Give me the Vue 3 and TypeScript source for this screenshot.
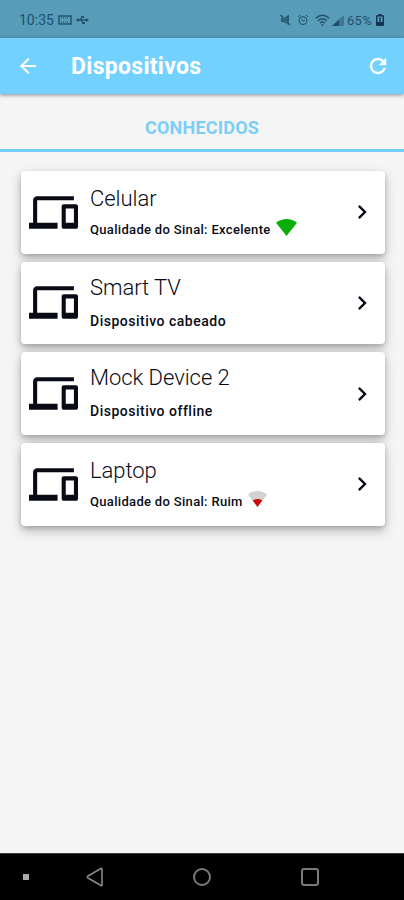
<script setup lang="ts">
interface Device {
  name: string
  status: string
  signal?: 'strong' | 'weak'
}

const devices: Device[] = [
  { name: 'Celular', status: 'Qualidade do Sinal: Excelente', signal: 'strong' },
  { name: 'Smart TV', status: 'Dispositivo cabeado' },
  { name: 'Mock Device 2', status: 'Dispositivo offline' },
  { name: 'Laptop', status: 'Qualidade do Sinal: Ruim', signal: 'weak' },
]
</script>

<template>
  <div class="screen">
    <div class="status-bar">
      <div class="status-left">
        <span class="clock">10:35</span>
        <svg class="cast" width="14" height="10" viewBox="0 0 14 10">
          <rect x="1" y="1" width="12" height="8" fill="none" stroke="currentColor" stroke-width="1.4" />
          <path d="M3 3h8M3 7h8" stroke="currentColor" stroke-width="1" stroke-dasharray="1 1" />
        </svg>
        <svg class="usb" width="13" height="10" viewBox="0 0 13 10">
          <path d="M1 5h10M4 5l2-3h1M5 5l2 3h1" fill="none" stroke="currentColor" stroke-width="1.3" />
          <circle cx="2" cy="5" r="1.5" fill="currentColor" />
          <path d="M10 3l3 2-3 2zM5.500 1h2.400v2H5.500zM6.500 7h2.400v2H6.500z" fill="currentColor" />
        </svg>
      </div>
      <div class="status-right">
        <svg class="mute" width="11" height="12" viewBox="0 0 11 12">
          <path d="M1 4h3l5-3.500v11L4 8H1z" fill="currentColor" opacity=".85" />
          <path d="M.5 1l9.500 10" stroke="#579db9" stroke-width="2" />
          <path d="M.5 1l9.500 10" stroke="currentColor" stroke-width="1.300" />
        </svg>
        <svg class="alarm" width="12" height="12" viewBox="0 0 12 12" fill="none" stroke="currentColor" stroke-width="1">
          <circle cx="6" cy="6.600" r="4" />
          <path d="M1 2.800L3.200 1M11 2.800L8.800 1M4 5.200l2 2 2-1.400" />
        </svg>
        <svg class="wifi" width="15" height="13" viewBox="0 0 15 13" fill="none" stroke="currentColor" stroke-width="1.400">
          <path d="M.8 4.200Q7.500-1.800 14.200 4.200M3 6.700Q7.500 2.700 12 6.700M5.100 9Q7.500 7 9.900 9" />
          <circle cx="7.500" cy="11" r="1" fill="currentColor" stroke="none" />
        </svg>
        <svg class="cell" width="12" height="11" viewBox="0 0 12 11">
          <path d="M0 11L12 0v11z" fill="currentColor" opacity=".5" />
          <path d="M0 11l7-6.400V11z" fill="currentColor" />
        </svg>
        <span class="percent">65%</span>
        <svg class="battery" width="8" height="12" viewBox="0 0 8 12">
          <path d="M2.500 0h3v1.500h-3z" fill="currentColor" />
          <rect x=".7" y="1.700" width="6.600" height="9.600" rx=".6" fill="none" stroke="currentColor" stroke-width="1.400" />
          <path d="M1 8h6v3H1zM3.300 3.500h1.400v5H3.300z" fill="currentColor" />
        </svg>
      </div>
    </div>

    <header class="app-bar">
      <svg class="back" width="24" height="24" viewBox="0 0 24 24">
        <path d="M20 11H7.830l5.590-5.590L12 4l-8 8 8 8 1.410-1.410L7.830 13H20v-2z" fill="currentColor" />
      </svg>
      <h1>Dispositivos</h1>
      <svg class="refresh" width="24" height="24" viewBox="0 0 24 24">
        <path d="M17.650 6.350A7.960 7.960 0 0 0 12 4a8 8 0 1 0 7.730 10h-2.080A6 6 0 1 1 12 6c1.660 0 3.140.69 4.220 1.780L13 11h7V4l-2.350 2.350z" fill="currentColor" stroke="currentColor" stroke-width=".4" />
      </svg>
    </header>

    <div class="tab">CONHECIDOS</div>

    <main class="list">
      <article v-for="device in devices" :key="device.name" class="card" :class="{ wireless: device.signal }">
        <svg class="device-icon" viewBox="0 0 24 24">
          <path d="M4 6h18V4H4c-1.100 0-2 .9-2 2v11H0v3h14v-3H4V6zm19 2h-6c-.55 0-1 .45-1 1v10c0 .55.45 1 1 1h6c.55 0 1-.45 1-1V9c0-.55-.45-1-1-1zm-1 9h-4v-7h4v7z" fill="currentColor" />
        </svg>
        <div class="info">
          <h2>{{ device.name }}</h2>
          <div class="status">
            <span>{{ device.status }}</span>
            <svg v-if="device.signal === 'strong'" class="signal strong" viewBox="0 0 24 19" preserveAspectRatio="none">
              <path d="M0 4.200C7-1.400 17-1.400 24 4.200L12 19z" fill="#0aad0a" />
            </svg>
            <svg v-else-if="device.signal === 'weak'" class="signal weak" viewBox="0 0 24 19" preserveAspectRatio="none">
              <path d="M0 4.200C7-1.400 17-1.400 24 4.200L12 19z" fill="#d2d2d2" />
              <path d="M6 11.400C9 9 15 9 18 11.400L12 19z" fill="#c80a0a" />
            </svg>
          </div>
        </div>
        <svg class="chevron" width="28" height="28" viewBox="0 0 24 24">
          <path d="M8.590 16.590L13.170 12 8.590 7.410 10 6l6 6-6 6z" fill="currentColor" />
        </svg>
      </article>
    </main>

    <nav class="nav-bar">
      <span class="dot"></span>
      <svg class="nav-back" width="18" height="20" viewBox="0 0 18 20">
        <path d="M16 2v16q0 1-1 .5L2 11q-1.400-1 0-2L15 1.500q1-.5 1 .5z" fill="none" stroke="currentColor" stroke-width="1.600" />
      </svg>
      <span class="home"></span>
      <span class="recents"></span>
    </nav>
  </div>
</template>

<style>
body {
  margin: 0;
}
</style>

<style scoped>
.screen {
  display: flex;
  flex-direction: column;
  width: 404px;
  height: 900px;
  overflow: hidden;
  background: #f5f5f5;
  font-family: Roboto, sans-serif;
  color: #080b16;
}

.status-bar {
  flex: none;
  display: flex;
  justify-content: space-between;
  align-items: center;
  box-sizing: border-box;
  height: 38px;
  padding: 2px 20px 0 19px;
  background: #579db9;
  color: #214f6b;
  font-size: 14px;
}

.status-left,
.status-right {
  display: flex;
  align-items: center;
}

.cast {
  margin-left: 4px;
}

.usb {
  margin-left: 4px;
}

.alarm {
  margin-left: 6px;
}

.wifi {
  margin-left: 6px;
}

.cell {
  margin-left: 2px;
}

.percent {
  margin-left: 3px;
  font-size: 13px;
  letter-spacing: 0.3px;
}

.battery {
  margin-left: 4px;
  color: #12364f;
}

.app-bar {
  flex: none;
  position: relative;
  display: flex;
  align-items: center;
  height: 56px;
  padding: 0 14px 0 16px;
  box-sizing: border-box;
  background: #73d1ff;
  color: #fff;
  box-shadow: 0 1px 4px rgba(0, 0, 0, 0.45);
}

.app-bar h1 {
  flex: 1;
  margin: 1px 0 0 31px;
  font-size: 23px;
  line-height: 28px;
  font-weight: 700;
  letter-spacing: 0.3px;
}

.tab {
  flex: none;
  box-sizing: border-box;
  height: 58px;
  padding-top: 9px;
  border-bottom: 3px solid #73cef7;
  color: #7bcff7;
  font-size: 18px;
  font-weight: 700;
  line-height: 50px;
  letter-spacing: 0.22px;
  text-align: center;
}

.list {
  flex: 1;
  display: flex;
  flex-direction: column;
  gap: 8.200px;
  padding: 19px 19px 0 21px;
}

.card {
  flex: none;
  display: flex;
  align-items: center;
  box-sizing: border-box;
  height: 82.500px;
  padding: 0 9px 0 8px;
  border-radius: 4px;
  background: #fff;
  box-shadow: 0 5px 12px rgba(0, 0, 0, 0.25), 0 2px 4px rgba(0, 0, 0, 0.16);
}

.device-icon {
  width: 49px;
  height: 49px;
}

.info {
  flex: 1;
  align-self: stretch;
  margin-left: 12px;
  padding-top: 12px;
}

.info h2 {
  margin: 0;
  font-size: 22px;
  line-height: 28px;
  font-weight: 300;
  letter-spacing: -0.05px;
}

.status {
  display: flex;
  align-items: center;
  height: 20px;
  margin-top: 9px;
  font-size: 14px;
  line-height: 20px;
  font-weight: 500;
  letter-spacing: 0.5px;
}

.wireless .info {
  padding-top: 14px;
}

.wireless .status {
  margin-top: 7px;
  font-size: 13px;
  letter-spacing: 0.32px;
}

.signal {
  margin: -6px 0 0 5px;
}

.strong {
  width: 21px;
  height: 17px;
}

.weak {
  width: 19px;
  height: 16px;
}

.nav-bar {
  flex: none;
  display: flex;
  align-items: center;
  height: 46px;
  border-top: 1px solid #3c3c3c;
  background: #000;
  color: #878787;
}

.dot {
  width: 6px;
  height: 6px;
  margin-left: 23px;
  background: #aaa;
}

.nav-back {
  margin-left: 57px;
}

.home {
  box-sizing: border-box;
  width: 18px;
  height: 18px;
  margin-left: 89px;
  border: 2px solid #7a7a7a;
  border-radius: 50%;
}

.recents {
  box-sizing: border-box;
  width: 18px;
  height: 18px;
  margin-left: 90px;
  border: 2px solid #7a7a7a;
  border-radius: 3px;
}
</style>
